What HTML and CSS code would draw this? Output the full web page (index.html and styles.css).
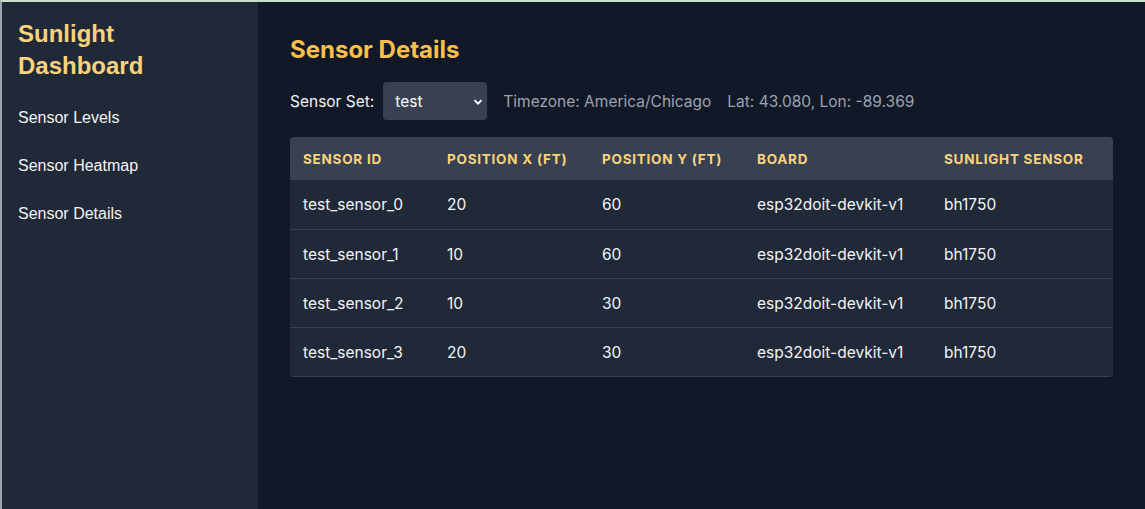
FILE: index.html
```html
<!DOCTYPE html>
<html>
<head>
<meta charset="utf-8">
<link rel="stylesheet" href="styles.css">
</head>
<body>
<div class="app">
  <aside class="sidebar">
    <h1 class="brand">Sunlight Dashboard</h1>
    <nav class="nav">
      <a class="nav-item">Sensor Levels</a>
      <a class="nav-item">Sensor Heatmap</a>
      <a class="nav-item">Sensor Details</a>
    </nav>
  </aside>
  <main class="main">
    <h2 class="page-title">Sensor Details</h2>
    <div class="controls">
      <label class="label">Sensor Set:</label>
      <div class="select">
        <span>test</span>
        <svg class="chev" width="10" height="10" viewBox="0 0 10 10"><path d="M1.5 3.2 L5 6.7 L8.5 3.2" fill="none" stroke="#fff" stroke-width="1.8"/></svg>
      </div>
      <span class="meta">Timezone: America/Chicago</span>
      <span class="meta">Lat: 43.080, Lon: -89.369</span>
    </div>
    <div class="table-wrap">
      <table class="table">
        <thead>
          <tr>
            <th class="c1">Sensor ID</th>
            <th class="c2">Position X (ft)</th>
            <th class="c3">Position Y (ft)</th>
            <th class="c4">Board</th>
            <th class="c5">Sunlight Sensor</th>
          </tr>
        </thead>
        <tbody>
          <tr><td>test_sensor_0</td><td>20</td><td>60</td><td>esp32doit-devkit-v1</td><td>bh1750</td></tr>
          <tr><td>test_sensor_1</td><td>10</td><td>60</td><td>esp32doit-devkit-v1</td><td>bh1750</td></tr>
          <tr><td>test_sensor_2</td><td>10</td><td>30</td><td>esp32doit-devkit-v1</td><td>bh1750</td></tr>
          <tr><td>test_sensor_3</td><td>20</td><td>30</td><td>esp32doit-devkit-v1</td><td>bh1750</td></tr>
        </tbody>
      </table>
    </div>
  </main>
</div>
</body>
</html>
```

FILE: styles.css
```css
html, body {
  margin: 0;
  padding: 0;
  height: 100%;
}
body {
  background: #111827;
  border-top: 2px solid #c6dfc6;
  border-left: 2px solid #9ca3af;
  box-sizing: border-box;
  font-family: Inter, "Liberation Sans", sans-serif;
  overflow: hidden;
}
.app {
  display: flex;
  height: 100%;
}
.sidebar {
  width: 256px;
  flex: none;
  background: #1f2937;
  padding: 16px;
  box-sizing: border-box;
  font-family: "Liberation Sans", Arial, sans-serif;
}
.brand {
  margin: 0 0 12px;
  font-size: 24px;
  line-height: 32px;
  font-weight: bold;
  color: #fcd37a;
}
.nav {
  display: flex;
  flex-direction: column;
}
.nav-item {
  color: #f3f4f6;
  font-size: 16px;
  line-height: 48px;
}
.main {
  flex: 1;
  padding: 32px;
  min-width: 0;
}
.page-title {
  margin: 0 0 16px;
  font-size: 24px;
  line-height: 32px;
  font-weight: 700;
  color: #fbbf4a;
}
.controls {
  display: flex;
  align-items: center;
  margin-bottom: 17px;
  font-size: 15.5px;
}
.label {
  color: #f3f4f6;
  margin-right: 9px;
}
.select {
  width: 104px;
  height: 38px;
  box-sizing: border-box;
  background: #374151;
  border-radius: 4px;
  color: #fff;
  display: flex;
  align-items: center;
  justify-content: space-between;
  padding: 0 4px 0 12px;
  margin-right: 16px;
}
.chev { margin-top: 1px; }
.meta {
  color: #9ca3af;
  margin-right: 16px;
}
.table-wrap {
  width: 823px;
  border-radius: 4px;
  overflow: hidden;
  border-bottom: 1px solid #374151;
}
.table {
  width: 100%;
  border-collapse: collapse;
  background: #1f2937;
}
.table th {
  background: #374151;
  color: #fcd37a;
  font-size: 13.5px;
  font-weight: 700;
  text-transform: uppercase;
  text-align: left;
  height: 43px;
  padding: 0 13px;
  letter-spacing: 0.75px;
}
.table td {
  color: #f3f4f6;
  font-size: 15.5px;
  height: 48px;
  padding: 0 13px;
  border-top: 1px solid #374151;
}
.table tbody tr:first-child td { border-top: none; height: 49px; }
.c1 { width: 118px; }
.c2 { width: 129px; }
.c3 { width: 129px; }
.c4 { width: 161px; }
```
